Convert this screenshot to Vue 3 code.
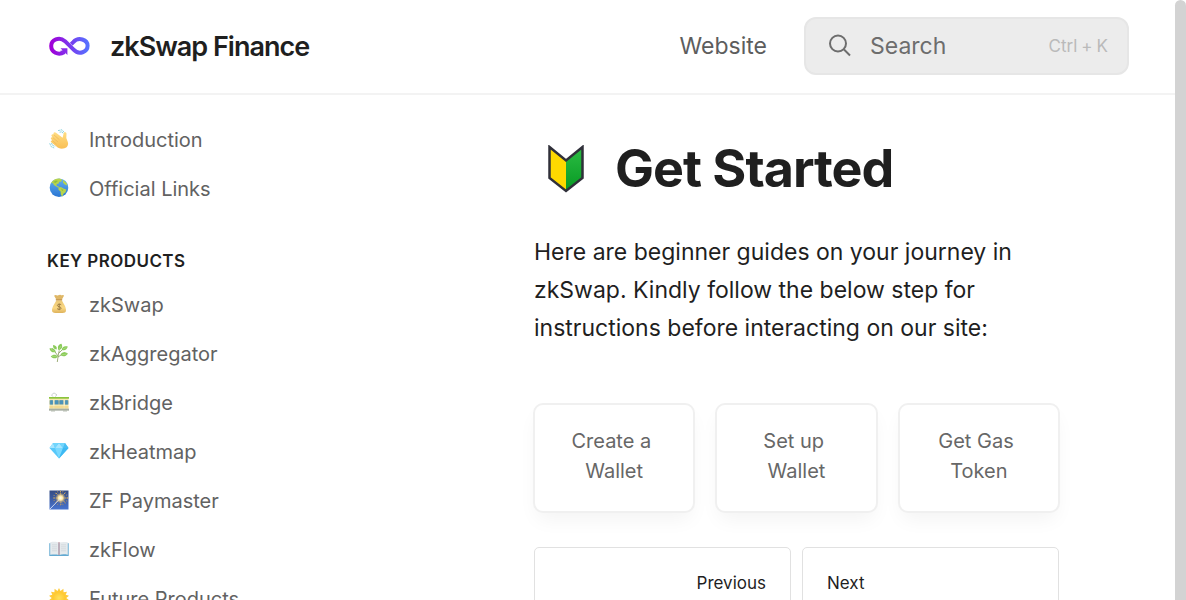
<script setup>
const intro = [
  { icon: 'wave', label: 'Introduction' },
  { icon: 'globe', label: 'Official Links' }
]
const products = [
  { icon: 'bag', label: 'zkSwap' },
  { icon: 'herb', label: 'zkAggregator' },
  { icon: 'tram', label: 'zkBridge' },
  { icon: 'gem', label: 'zkHeatmap' },
  { icon: 'sparkler', label: 'ZF Paymaster' },
  { icon: 'book', label: 'zkFlow' },
  { icon: 'sun', label: 'Future Products' }
]
const groups = [
  { title: '', items: intro },
  { title: 'KEY PRODUCTS', items: products }
]
const cards = ['Create a \nWallet', 'Set up \nWallet', 'Get Gas \nToken']
</script>

<template>
  <div class="page">
    <svg class="defs" width="0" height="0" aria-hidden="true">
      <defs>
        <linearGradient id="hand" x1="0" y1="0" x2="0" y2="1"><stop stop-color="#ffdd82" /><stop offset="1" stop-color="#f9bf55" /></linearGradient>
        <linearGradient id="sea" x1="0" y1="0" x2="0" y2="1"><stop stop-color="#65b0ef" /><stop offset="1" stop-color="#2875d3" /></linearGradient>
        <linearGradient id="sack" x1="0" y1="0" x2="0" y2="1"><stop stop-color="#eac776" /><stop offset=".6" stop-color="#fad884" /><stop offset="1" stop-color="#deb25b" /></linearGradient>
        <linearGradient id="night" x1="0" y1="0" x2="0" y2="1"><stop stop-color="#344b83" /><stop offset="1" stop-color="#4773ce" /></linearGradient>
        <radialGradient id="flash"><stop stop-color="#fff" /><stop offset=".4" stop-color="#ffe8a3" /><stop offset="1" stop-color="#c89b50" stop-opacity="0" /></radialGradient>
        <radialGradient id="sunfill"><stop stop-color="#ffe15c" /><stop offset="1" stop-color="#ffc72e" /></radialGradient>
        <symbol id="wave" viewBox="0 0 20 20">
          <path d="M9 1.600 13 .8l2.600 3M10.500 3.200l2.500-.4 1.300 1.800M.7 14.300l1.500 3.400 3.500 1.500M2.500 14l1 2.400 2.700 1" fill="none" stroke="#83cfdb" stroke-width=".9" stroke-dasharray="2 .5" />
          <path d="M2.200 13.200c-1-1 .1-2.300 1.200-1.600l-1.300-1.500c-.9-1.200.6-2.500 1.700-1.500L2.700 7.300c-1-1.300.8-2.800 2-1.600L4.600 5C4 3.500 5.800 2.500 7 3.700l6.600 5 1-4.300c.5-1.800 3.200-1.300 2.900.5l-.2 4 1.500 4.100c1.100 3.200-.8 6.100-4.600 6.600-2.900.4-5.500-.8-7-2.400z" fill="url(#hand)" />
          <path d="m4.700 5.700 5.700 5M3.800 8.600l5.100 4.300M3.400 11.600l4.100 3.500" fill="none" stroke="#e6b157" stroke-width=".6" />
        </symbol>
        <symbol id="globe" viewBox="0 0 20 20">
          <circle cx="10" cy="9.700" r="9.300" fill="url(#sea)" />
          <path d="M2 5.300C4 1.800 7 .5 10.500.6l2.500.9-.8 2.200-2 .1-.5 1.700-2.100.6.2 1.900 1.800.4 1 1.200-1.700-.1-2.400-1.600-1.600-1-1-1.800zM9.500 9.700l2.400-.8 2.600 1.600 2.800.9-.7 2.800-2.100 1.500-1.200 3.100-1.500-2.300-.2-3.100-2.100-1.600zM14 2l3.500 3 .8 2.500-2.600-.9-1.700-2z" fill="#b8d44b" />
          <path d="m4 4 3-1.400 2 .4-2.500 2zM12 10.500l2.600 1.400-1.400 1.200z" fill="#8fbd40" />
        </symbol>
        <symbol id="bag" viewBox="0 0 20 20">
          <path d="M5.1 1.7c1.700-1.500 2.700.4 4.100-.4 1.200-.7 2.600-.7 3.800.1 1-.7 1.900-.2 2 .4l-2.400 4.100h-5z" fill="#dfb766" />
          <path d="M7.400 6.300h5.400c1.200 2.700 4.500 6.500 4.200 10.300-.1 1.800-1.500 2.400-3.400 2.400H6.400C4.100 19 3 18.200 3 16.300 3 12.900 6.200 9 7.400 6.300z" fill="url(#sack)" />
          <path d="M6.800 5.100h6.400v1.300H6.800z" fill="#c99a52" />
          <path d="M12.200 10.800c-1-1-3.800-.8-3.800.7 0 1.600 3.700.9 3.700 2.700 0 1.600-3.100 1.500-4 .4M10.200 9.600v6.600" fill="none" stroke="#9d7d45" stroke-width="1" />
        </symbol>
        <symbol id="herb" viewBox="0 0 20 20">
          <path d="M8.300 19c.6-4.500 1-8 2-11.500M9 13 3.400 5.300M9 14l6.800-4.500M9.500 10.500 16 4" fill="none" stroke="#879b5b" stroke-width=".8" />
          <path d="M9.600 7.200C8 3.600 9.400 1.600 12.500.8c1.500 3.200.6 5.400-2.900 6.400zM12.800 7c.3-3.400 2.600-4.400 6-3.400-.7 3.200-3.100 4.400-6 3.400zM11.600 12c.8-3.200 4.200-3.700 7.400-1.300-2.300 2.800-5.200 3.400-7.400 1.300zM8.700 13.200c-.8 2.700-4.400 2.900-7 .3 2.400-2.600 5.300-2.300 7-.3zM6.700 9C4 10.100 1.400 8.600.4 5.400 4 4.800 6.300 6 6.700 9zM7.600 6.500C4.800 6.500 3.900 4.600 4 2.100c3 .4 4.400 1.900 3.600 4.400z" fill="#8acb59" />
          <path d="m10.200 6 1.800-3M14 6l3.400-1.500M13 11.800l4.600-.8M3 13.400l4.500-.1M2 6.400l3.700 2" stroke="#b7e091" stroke-width=".6" />
        </symbol>
        <symbol id="tram" viewBox="0 0 20 20">
          <path d="M4 4.700 2.500 2.900l2.500-2 3 2L6 4.700" fill="none" stroke="#b8c0bf" stroke-width=".7" />
          <path d="M.5 5h19v13H.5z" fill="#f5e8ad" /><path d="M0 5h20v1.700H0z" fill="#8bc43d" />
          <path d="M.5 8.300h19v4.200H.5z" fill="#93aca0" />
          <path d="M1.200 8.300h2.600v4.200H1.200zm4.600 0h3.400v3.900H5.800zm5 0h3.400v3.900h-3.400zm5.400 0h2.600v4.200h-2.600z" fill="#4a93ba" />
          <path d="M4.200 7.500h1.200v9H4.200zm10.400 0h1.200v9h-1.200z" fill="#fbf2cd" /><path d="M.5 14.500h19v1H.5z" fill="#f0cf78" />
          <path d="M0 17h20v1.200H0zM2 19h4m8 0h4" fill="#a8b0a2" stroke="#a8b0a2" stroke-width=".8" />
        </symbol>
        <symbol id="gem" viewBox="0 0 20 20">
          <path d="M4 2h12l3.500 5L10 17.500.5 7z" fill="#57c8fa" />
          <path d="M4 2 .5 7H6zm6 0L6 7h8z" fill="#a5e5ff" /><path d="m4 2 2 5 4-5zm6 0 4 5 2-5z" fill="#71d5fc" />
          <path d="M6 7h8l-4 10.500z" fill="#79d9ff" /><path d="M14 7h5.500L10 17.500z" fill="#3db9f3" /><path d="m16 2-2 5h5.500z" fill="#4abef3" />
        </symbol>
        <symbol id="sparkler" viewBox="0 0 20 20">
          <path d="M.5.5h19v19H.5z" fill="url(#night)" />
          <circle cx="11.500" cy="8" r="6.800" fill="none" stroke="#a08a68" stroke-width="1.500" stroke-dasharray=".8 1.800" />
          <path d="m11.500 1 .4 14M4.600 8h14M7 3l9.500 10M16 3 7 12.500" stroke="#d5ab61" stroke-width=".9" stroke-dasharray="1.500 .7" />
          <circle cx="11.500" cy="8" r="5.500" fill="url(#flash)" /><path d="m1 19 9.700-10" stroke="#d6dff2" stroke-width=".9" />
        </symbol>
        <symbol id="book" viewBox="0 0 20 20">
          <path d="M.3 4.200h19.400V17H.3z" fill="#62a9d1" />
          <path d="M1.200 3.200c3.700-.5 6.800-.5 8.500.4v12.300c-2.800-.8-5.600-.5-8.500-.2zM10.300 3.600c2.100-.9 5.300-.8 8.500-.4v12.500c-3-.4-5.800-.6-8.500.2z" fill="#e5eaed" />
          <path d="M3 5.800h5M3 7.800h5M3 9.800h5M3 11.800h5M12 5.800h5M12 7.800h5M12 9.800h5M12 11.800h5" stroke="#cdd5d9" stroke-width=".7" />
          <path d="M10 3v13" stroke="#b88691" stroke-width="1" />
        </symbol>
        <symbol id="sun" viewBox="0 0 20 20">
          <path d="m10 0 1.500 3L14.400.8l.2 3.400 3.400-.5-1.300 3.100 3.300 1-2.700 2.200 2.700 2.200-3.300 1 1.300 3.100-3.400-.5-.2 3.400-2.900-2.200-1.500 3-1.500-3-2.900 2.200-.2-3.400-3.400.5 1.300-3.100-3.300-1L2.700 10 0 7.800l3.300-1L2 3.700l3.400.5L5.600.8 8.500 3z" fill="#ffcb3a" />
          <circle cx="10" cy="10" r="6.500" fill="url(#sunfill)" />
        </symbol>
      </defs>
    </svg>

    <header class="header">
      <a class="brand" href="#">
        <svg class="logo" viewBox="0 0 42 20" aria-hidden="true">
          <defs><linearGradient id="brandfill" x1="0" y1="0" x2="1" y2="0"><stop stop-color="#a000d8" /><stop offset=".5" stop-color="#7b38ed" /><stop offset="1" stop-color="#5671ff" /></linearGradient></defs>
          <path d="M16.500 16C10 20 3.200 16 3.200 10S11 .2 17 5.200l8.600 8.500C31 19.500 39.600 16 39.600 9.800S30.500.5 25.300 6.100l-2 2" fill="none" stroke="url(#brandfill)" stroke-width="4" />
          <path d="M12.500 12.300h6.900V19l-2.200-2.200-3.300 1-1.600-3 2.400-.4z" fill="#8828e9" />
        </svg>
        <span>zkSwap Finance</span>
      </a>
      <a class="website" href="#">Website</a>
      <button class="search" type="button">
        <svg viewBox="0 0 24 24" aria-hidden="true"><circle cx="10" cy="9.500" r="8" /><path d="m16 15.500 6 6" /></svg>
        <span>Search</span>
        <kbd><span>Ctrl</span><span>+</span><span>K</span></kbd>
      </button>
    </header>

    <div class="body">
      <nav class="sidebar" aria-label="Documentation">
        <section v-for="group in groups" :key="group.title" class="group">
          <h2 v-if="group.title">{{ group.title }}</h2>
          <a v-for="item in group.items" :key="item.label" href="#">
            <svg aria-hidden="true"><use :href="'#' + item.icon" /></svg>{{ item.label }}
          </a>
        </section>
      </nav>
      <main>
        <h1>
          <svg viewBox="0 0 36 48" aria-hidden="true">
            <defs><linearGradient id="leaf" x1="0" y1="0" x2="0" y2="1"><stop stop-color="#2cbd44" /><stop offset="1" stop-color="#079923" /></linearGradient></defs>
            <path d="M1.500 2 18 15.500V46L1.500 33z" fill="#ffd900" /><path d="M34.500 2 18 15.500V46l16.500-13z" fill="url(#leaf)" />
            <path d="M1.500 2 18 15.500 34.500 2v31L18 46 1.500 33z" fill="none" stroke="#30303a" stroke-width="2.500" />
          </svg>
          Get Started
        </h1>
        <p>Here are beginner guides on your journey in zkSwap. Kindly follow the below step for instructions before interacting on our site:</p>
        <div class="cards"><a v-for="card in cards" :key="card" href="#">{{ card }}</a></div>
        <div class="pager"><a class="previous" href="#">Previous</a><a href="#">Next</a></div>
      </main>
    </div>
    <div class="scrollbar" aria-hidden="true"></div>
  </div>
</template>

<style>
body { margin: 0; background: #fff; }
</style>
<style scoped>
* { box-sizing: border-box; }
.page { position: relative; height: 100vh; overflow: hidden; padding-right: 11px; font-family: Inter, sans-serif; color: #1f1f1f; background: #fff; }
.defs { position: absolute; }
a { color: inherit; text-decoration: none; }
.header { height: 95px; display: flex; align-items: center; padding: 0 46px 1px 48px; border-bottom: 2px solid #f3f3f3; }
.brand { display: flex; align-items: center; gap: 20px; margin-right: auto; font-size: 27px; font-weight: 600; letter-spacing: -1px; }
.logo { width: 42px; height: 20px; }
.website { font-size: 23px; color: #5d5d5d; margin-right: 37px; }
.search { width: 325px; height: 58px; display: flex; align-items: center; padding: 0 19px 0 22px; border: 2px solid #e6e6e6; border-radius: 12px; background: #ececec; font: 23px Inter, sans-serif; color: #6d6d6d; text-align: left; }
.search svg { width: 24px; height: 24px; margin-right: 18px; fill: none; stroke: currentColor; stroke-width: 2; }
kbd { display: flex; gap: 4px; margin-left: auto; font: 17px Inter, sans-serif; color: #bababa; }
.body { display: grid; grid-template-columns: 487px minmax(0, 1fr); }
.sidebar { padding: 20px 40px 0 47px; }
.group + .group { margin-top: 35px; }
.group h2 { margin: 0 0 6px; font-size: 17px; line-height: 26px; font-weight: 600; letter-spacing: 0.025em; }
.group a { display: flex; align-items: center; height: 49px; font-size: 20px; color: #626262; }
.group svg { width: 20px; height: 20px; margin: 0 20px 2px 2px; flex: none; }
main { padding: 41px 116px 0 47px; }
h1 { display: flex; align-items: center; gap: 31px; margin: 0; padding-left: 14px; font-size: 52px; line-height: 66px; font-weight: 700; letter-spacing: -1px; }
h1 svg { width: 36px; height: 48px; }
p { margin: 31px 0 56px; font-size: 23px; line-height: 38px; }
.cards { display: grid; grid-template-columns: repeat(3, minmax(0, 1fr)); gap: 20px; margin: 0 -1px 34px; }
.cards a { height: 110px; padding: 22px 0; border: 2px solid #f0f0f0; border-radius: 10px; background: #fff; box-shadow: 0 10px 20px -4px #0000000d; text-align: center; white-space: pre; font-size: 20px; line-height: 30px; color: #676767; }
.cards a { padding: 21px 0; }
.pager { display: grid; grid-template-columns: 1fr 1fr; gap: 11px; }
.pager a { height: 88px; padding: 22px 24px; border: 1px solid #e1e1e1; border-radius: 5px; font-size: 17px; line-height: 26px; }
.pager .previous { text-align: right; }
.scrollbar { position: absolute; top: 0; right: 0; width: 11px; height: 100%; background: #d3d3d3; border-radius: 6px 6px 0 0; }
</style>
